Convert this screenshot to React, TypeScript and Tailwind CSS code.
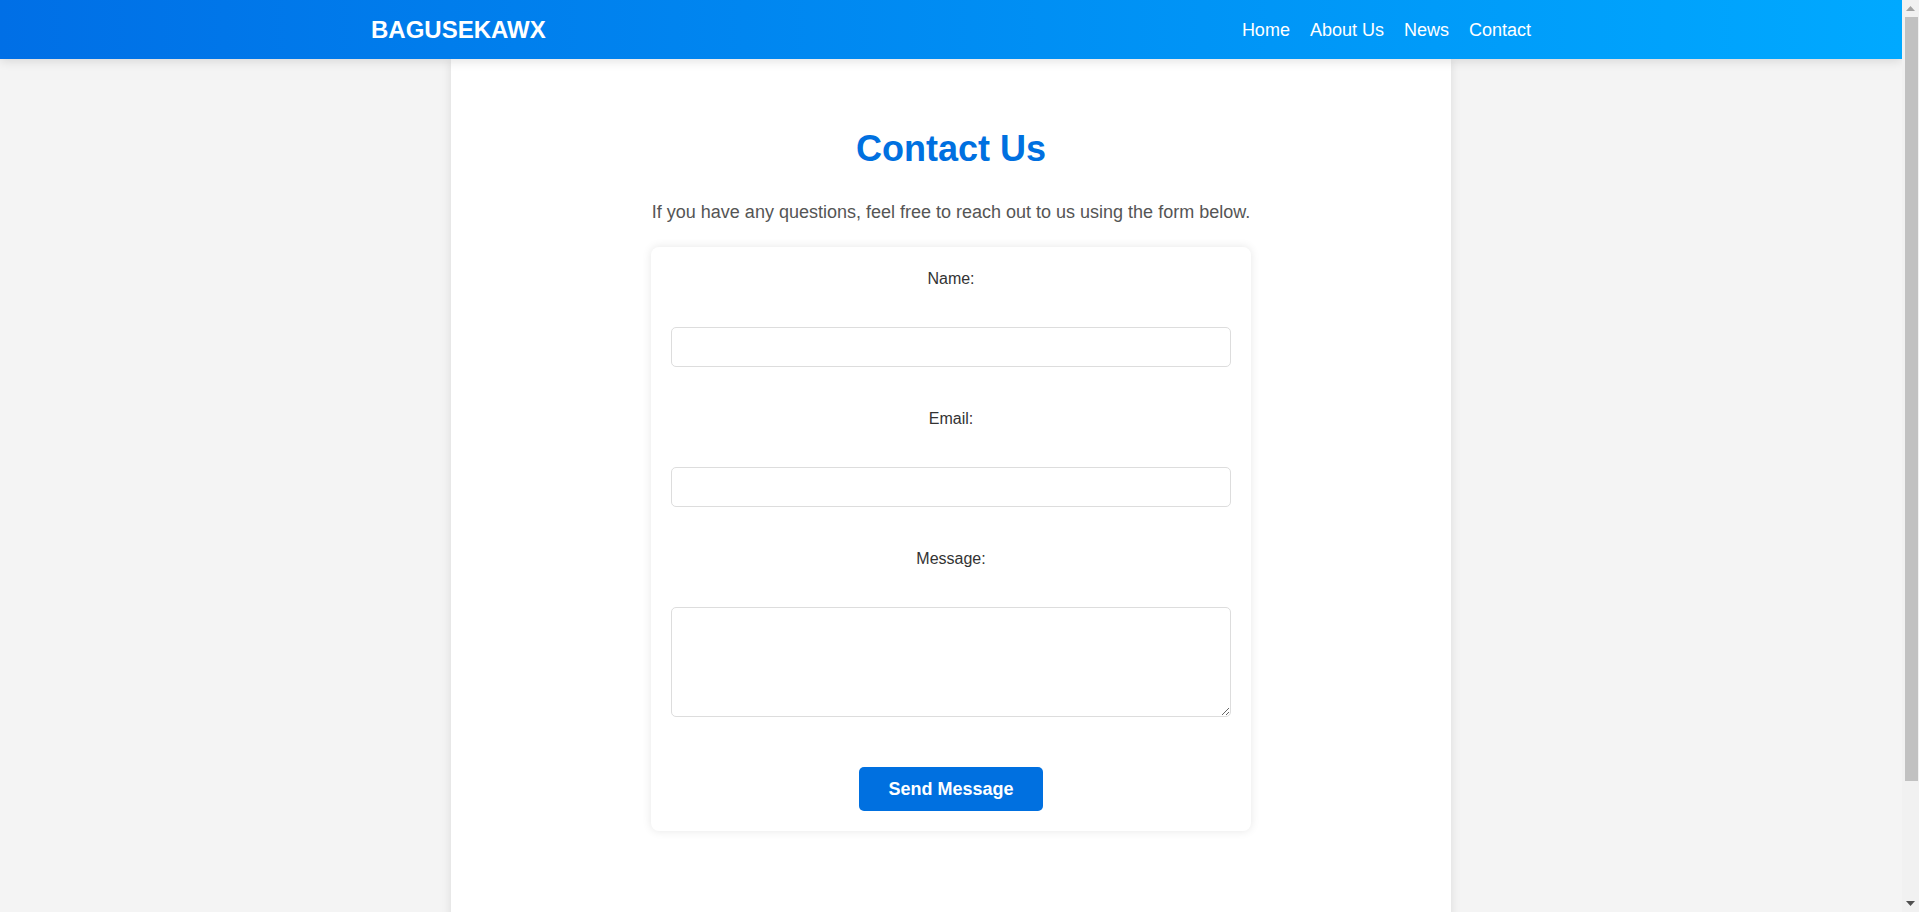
import React from "react";

const links = ["Home", "About Us", "News", "Contact"];

const Header: React.FC = () => {
  return (
    <header className="relative z-10 h-[59px] w-full bg-gradient-to-r from-[#006fe6] to-[#00a9ff] shadow-[0_2px_10px_rgba(0,0,0,0.12)]">
      <div className="mx-auto flex h-full max-w-[1200px] items-center justify-between px-5">
        <div className="text-2xl font-bold text-white">BAGUSEKAWX</div>
        <nav className="flex items-center gap-5">
          {links.map((l) => (
            <a key={l} href="#" className="text-lg text-white">
              {l}
            </a>
          ))}
        </nav>
      </div>
    </header>
  );
};

const Field: React.FC<{ label: string; area?: boolean }> = ({ label, area }) => {
  return (
    <div className="flex flex-col">
      <label className="mb-9 block h-6 text-center text-base leading-6 text-[#333]">
        {label}
      </label>
      {area ? (
        <textarea className="mb-[50px] h-[110px] w-full rounded-[5px] border border-[#dddddd] bg-white p-2.5" />
      ) : (
        <input
          type="text"
          className="mb-10 h-10 w-full rounded-[5px] border border-[#dddddd] bg-white px-2.5"
        />
      )}
    </div>
  );
};

// window scrollbar as seen in the screenshot
const ScrollBar: React.FC = () => {
  return (
    <div className="flex h-screen w-[17px] shrink-0 flex-col bg-[#f1f1f1]">
      <div className="flex h-[17px] items-center justify-center">
        <svg width="9" height="5" viewBox="0 0 9 5">
          <path d="M4.5 0 L9 5 L0 5 Z" fill="#a3a3a3" />
        </svg>
      </div>
      <div className="ml-[3px] mr-px h-[764px] bg-[#c1c1c1]" />
      <div className="flex-1" />
      <div className="flex h-[17px] items-center justify-center">
        <svg width="9" height="5" viewBox="0 0 9 5">
          <path d="M0 0 L9 0 L4.5 5 Z" fill="#505050" />
        </svg>
      </div>
    </div>
  );
};

export default function App() {
  return (
    <div
      className="flex h-screen overflow-hidden bg-[#f4f4f4]"
      style={{ fontFamily: '"Liberation Sans", Arial, sans-serif' }}
    >
      <div className="min-w-0 flex-1 overflow-hidden">
        <Header />
        <main className="mx-auto h-[989px] max-w-[1000px] bg-white pt-[69px] shadow-[0_0_10px_rgba(0,0,0,0.1)]">
          <h1 className="text-center text-[36px] font-bold leading-[41px] text-[#0070e0]">
            Contact Us
          </h1>
          <p className="mt-[33px] text-center text-lg leading-[21px] text-[#555]">
            If you have any questions, feel free to reach out to us using the form below.
          </p>
          <form className="mx-auto mt-6 w-[600px] rounded-lg bg-white p-5 shadow-[0_0_10px_rgba(0,0,0,0.1)]">
            <Field label="Name:" />
            <Field label="Email:" />
            <Field label="Message:" area />
            <div className="flex justify-center">
              <button
                type="button"
                className="h-11 rounded-[5px] bg-[#0070e0] px-[29px] text-lg font-bold text-white"
              >
                Send Message
              </button>
            </div>
          </form>
        </main>
      </div>
      <ScrollBar />
    </div>
  );
}
